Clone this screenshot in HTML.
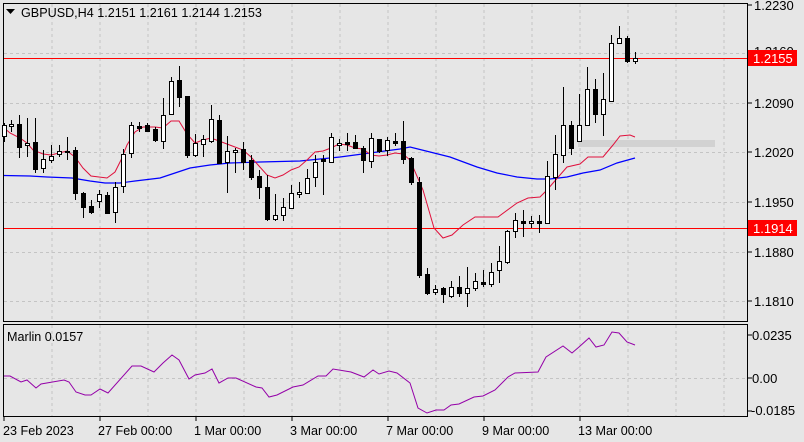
<!DOCTYPE html>
<html><head><meta charset="utf-8"><style>
html,body{margin:0;padding:0;background:#e6e6e6;width:804px;height:442px;overflow:hidden}
svg{display:block}
text{font-family:"Liberation Sans",sans-serif;font-size:12px;fill:#000}
.ax{font-size:13px}
.ti{font-size:12.6px}
</style></head><body>
<svg width="804" height="442" viewBox="0 0 804 442" xmlns="http://www.w3.org/2000/svg">
<rect x="0" y="0" width="804" height="442" fill="#e6e6e6"/>
<g stroke="#c4c4c4" stroke-dasharray="3,3" stroke-width="1" shape-rendering="crispEdges">
<path d="M52 4V321M100 4V321M148 4V321M196 4V321M244 4V321M292 4V321M340 4V321M388 4V321M436 4V321M484 4V321M532 4V321M580 4V321M628 4V321M676 4V321M724 4V321"/>
<path d="M4 53.5H747M4 103.5H747M4 152.5H747M4 202.5H747M4 252.5H747M4 301.5H747"/>
<path d="M52 325V416M100 325V416M148 325V416M196 325V416M244 325V416M292 325V416M340 325V416M388 325V416M436 325V416M484 325V416M532 325V416M580 325V416M628 325V416M676 325V416M724 325V416"/>
<path d="M4 378.5H747"/>
</g>
<rect x="578" y="140" width="137" height="7" fill="#d2d2d2"/>
<g stroke="#000" fill="none" shape-rendering="crispEdges">
<rect x="3.5" y="3.5" width="744" height="318"/>
<rect x="3.5" y="324.5" width="744" height="92"/>
</g>
<g stroke="#000" fill="none" shape-rendering="crispEdges">
<path d="M748 5h4M748 53h4M748 103h4M748 152h4M748 202h4M748 252h4M748 301h4M748 335h4M748 378h4M748 411h4"/>
<path d="M4 417v4M100 417v4M196 417v4M292 417v4M388 417v4M484 417v4M580 417v4"/>
</g>
<line x1="4" y1="58.5" x2="747" y2="58.5" stroke="#f00" stroke-width="1"/>
<line x1="4" y1="228.5" x2="747" y2="228.5" stroke="#f00" stroke-width="1"/>
<polyline fill="none" stroke="#0000ff" stroke-width="1.2" points="4,175.5 30,176 47,177 72,178 90,181 105,183 120,183 135,181 160,178 175,173 190,168 210,165 230,163 260,162 300,161 340,157 370,153 400,149 410,147 430,152 450,157 477,167 497,173 517,177 537,179 550,179 567,177 583,173 600,170 617,163 635,158"/>
<polyline fill="none" stroke="#e0103c" stroke-width="1" points="3,127 10,133 20,138 27,143 33,150 43,154 51,155 59,153 67,151 75,157 83,168 91,176 99,177 107,178 115,172 121,160 127,145 135,132 143,127 155,127 163,128 171,121 179,121 187,134 195,143 203,140 211,138 219,141 227,144 235,147 243,150 251,157 259,166 267,175 275,178 283,175 291,170 299,167 307,160 315,152 323,151 331,148 339,144 347,145 355,148 363,149 371,155 379,156 387,155 395,153 403,154 410,160 423,190 434,228 443,238 452,235 463,225 475,217 498,217 517,203 528,198 540,197 547,190 560,175 567,167 580,164 588,157 603,157 613,145 620,136 630,135 635,137"/>
<g stroke="#000" stroke-width="1" shape-rendering="crispEdges">
<path d="M4.5 123V142M11.5 120V132M19.5 115V158M27.5 118V157M35.5 118V173M43.5 150V173M51.5 145V163M59.5 145V157M67.5 137V160M75.5 147V200M83.5 192V218M91.5 200V214M99.5 190V208M107.5 192V214M115.5 182V223M123.5 149V193M131.5 122V158M139.5 122V132M147.5 123V132M155.5 127V142M163.5 98V149M171.5 77V115M179.5 66V107M187.5 96V158M195.5 134V157M203.5 135V157M211.5 105V143M219.5 115V163M227.5 136V193M235.5 148V173M243.5 142V170M251.5 155V180M259.5 170V199M267.5 175V221M275.5 194V221M283.5 198V221M291.5 185V209M299.5 182V198M307.5 169V194M315.5 155V187M323.5 155V195M331.5 133V163M339.5 139V151M347.5 133V151M355.5 135V149M363.5 146V173M371.5 133V168M379.5 139V153M387.5 137V156M395.5 133V146M403.5 121V164M411.5 157V185M419.5 177V278M427.5 268V295M435.5 285V295M443.5 287V303M451.5 281V298M459.5 276V297M467.5 267V307M475.5 273V291M483.5 270V287M491.5 263V287M499.5 246V283M507.5 230V264M515.5 213V238M523.5 210V237M531.5 216V228M539.5 215V233M547.5 161V223M555.5 135V190M563.5 87V163M571.5 121V155M579.5 94V141M587.5 67V126M595.5 79V123M603.5 73V136M611.5 35V101M619.5 26V43M627.5 36V63M635.5 52V64"/>
</g>
<g stroke="#000" stroke-width="1" shape-rendering="crispEdges">
<g fill="#fff">
<rect x="2.5" y="125.5" width="4" height="11"/><rect x="9.5" y="124.5" width="4" height="2"/><rect x="25.5" y="143.5" width="4" height="2"/><rect x="41.5" y="159.5" width="4" height="9"/><rect x="49.5" y="156.5" width="4" height="4"/><rect x="57.5" y="151.5" width="4" height="3"/><rect x="97.5" y="194.5" width="4" height="7"/><rect x="113.5" y="187.5" width="4" height="25"/><rect x="121.5" y="154.5" width="4" height="32"/><rect x="129.5" y="125.5" width="4" height="28"/><rect x="161.5" y="115.5" width="4" height="26"/><rect x="169.5" y="81.5" width="4" height="33"/><rect x="193.5" y="143.5" width="4" height="12"/><rect x="201.5" y="139.5" width="4" height="5"/><rect x="209.5" y="119.5" width="4" height="22"/><rect x="225.5" y="151.5" width="4" height="11"/><rect x="233.5" y="150.5" width="4" height="2"/><rect x="273.5" y="215.5" width="4" height="4"/><rect x="281.5" y="207.5" width="4" height="8"/><rect x="289.5" y="193.5" width="4" height="15"/><rect x="297.5" y="192.5" width="4" height="2"/><rect x="305.5" y="178.5" width="4" height="15"/><rect x="313.5" y="162.5" width="4" height="15"/><rect x="329.5" y="137.5" width="4" height="25"/><rect x="337.5" y="143.5" width="4" height="2"/><rect x="369.5" y="138.5" width="4" height="23"/><rect x="385.5" y="140.5" width="4" height="10"/><rect x="433.5" y="289.5" width="4" height="3"/><rect x="449.5" y="287.5" width="4" height="9"/><rect x="465.5" y="288.5" width="4" height="5"/><rect x="473.5" y="281.5" width="4" height="7"/><rect x="489.5" y="272.5" width="4" height="12"/><rect x="497.5" y="261.5" width="4" height="9"/><rect x="505.5" y="231.5" width="4" height="31"/><rect x="513.5" y="220.5" width="4" height="11"/><rect x="529.5" y="221.5" width="4" height="2"/><rect x="545.5" y="176.5" width="4" height="47"/><rect x="553.5" y="154.5" width="4" height="23"/><rect x="561.5" y="125.5" width="4" height="30"/><rect x="577.5" y="125.5" width="4" height="16"/><rect x="585.5" y="89.5" width="4" height="36"/><rect x="601.5" y="99.5" width="4" height="15"/><rect x="609.5" y="43.5" width="4" height="58"/><rect x="617.5" y="38.5" width="4" height="5"/><rect x="633.5" y="58.5" width="4" height="3"/>
</g>
<g fill="#000">
<rect x="17.5" y="124.5" width="4" height="23"/><rect x="33.5" y="142.5" width="4" height="27"/><rect x="65.5" y="151.5" width="4" height="1"/><rect x="73.5" y="150.5" width="4" height="43"/><rect x="81.5" y="193.5" width="4" height="14"/><rect x="89.5" y="206.5" width="4" height="6"/><rect x="105.5" y="195.5" width="4" height="18"/><rect x="137.5" y="126.5" width="4" height="2"/><rect x="145.5" y="125.5" width="4" height="6"/><rect x="153.5" y="129.5" width="4" height="11"/><rect x="177.5" y="80.5" width="4" height="17"/><rect x="185.5" y="96.5" width="4" height="59"/><rect x="217.5" y="120.5" width="4" height="43"/><rect x="241.5" y="149.5" width="4" height="13"/><rect x="249.5" y="160.5" width="4" height="17"/><rect x="257.5" y="176.5" width="4" height="11"/><rect x="265.5" y="187.5" width="4" height="32"/><rect x="321.5" y="159.5" width="4" height="2"/><rect x="345.5" y="142.5" width="4" height="2"/><rect x="353.5" y="142.5" width="4" height="6"/><rect x="361.5" y="148.5" width="4" height="12"/><rect x="377.5" y="139.5" width="4" height="12"/><rect x="393.5" y="141.5" width="4" height="2"/><rect x="401.5" y="141.5" width="4" height="18"/><rect x="409.5" y="158.5" width="4" height="24"/><rect x="417.5" y="182.5" width="4" height="93"/><rect x="425.5" y="274.5" width="4" height="19"/><rect x="441.5" y="288.5" width="4" height="6"/><rect x="457.5" y="287.5" width="4" height="6"/><rect x="481.5" y="282.5" width="4" height="2"/><rect x="521.5" y="221.5" width="4" height="2"/><rect x="537.5" y="221.5" width="4" height="2"/><rect x="569.5" y="125.5" width="4" height="23"/><rect x="593.5" y="89.5" width="4" height="25"/><rect x="625.5" y="38.5" width="4" height="23"/>
</g>
</g>
<polyline fill="none" stroke="#9400a8" stroke-width="1" points="4,376 10,376 21,382 27,380 36,388 41,384 64,380 69,382 76,392 85,395 91,395 100,389 108,393 132,366 141,366 154,372 163,363 172,355 179,360 189,379 195,375 205,373 212,369 219,383 228,378 236,378 256,387 262,388 269,397 277,395 293,387 303,385 318,376 326,376 333,369 351,372 364,377 373,370 379,374 389,371 397,373 410,383 418,408 427,413 436,410 444,410 451,405 459,404 474,397 483,396 495,390 508,377 515,373 538,372 546,357 563,346 572,353 579,347 589,338 596,347 604,345 612,332 619,333 627,342 635,345"/>
<path d="M6 9h9l-4.5 5z" fill="#000"/>
<text class="ti" x="21" y="17">GBPUSD,H4  1.2151 1.2161 1.2144 1.2153</text>
<text class="ti" x="7" y="341">Marlin 0.0157</text>
<g class="ax">
<text class="ax" x="754" y="10">1.2230</text>
<text class="ax" x="754" y="56">1.2160</text>
<text class="ax" x="754" y="108">1.2090</text>
<text class="ax" x="754" y="157">1.2020</text>
<text class="ax" x="754" y="207">1.1950</text>
<text class="ax" x="754" y="257">1.1880</text>
<text class="ax" x="754" y="306">1.1810</text>
<text class="ax" x="752" y="340">0.0235</text>
<text class="ax" x="752" y="383">0.00</text>
<text class="ax" x="751" y="415">-0.0185</text>
</g>
<rect x="748" y="50" width="49" height="16" fill="#f00"/>
<text class="ax" x="753" y="63" style="fill:#fff">1.2155</text>
<rect x="748" y="220" width="49" height="16" fill="#f00"/>
<text class="ax" x="753" y="233" style="fill:#fff">1.1914</text>
<g>
<text class="ti" x="3" y="435">23 Feb 2023</text>
<text class="ti" x="98" y="435">27 Feb 00:00</text>
<text class="ti" x="194" y="435">1 Mar 00:00</text>
<text class="ti" x="290" y="435">3 Mar 00:00</text>
<text class="ti" x="386" y="435">7 Mar 00:00</text>
<text class="ti" x="482" y="435">9 Mar 00:00</text>
<text class="ti" x="578" y="435">13 Mar 00:00</text>
</g>
</svg>
</body></html>
